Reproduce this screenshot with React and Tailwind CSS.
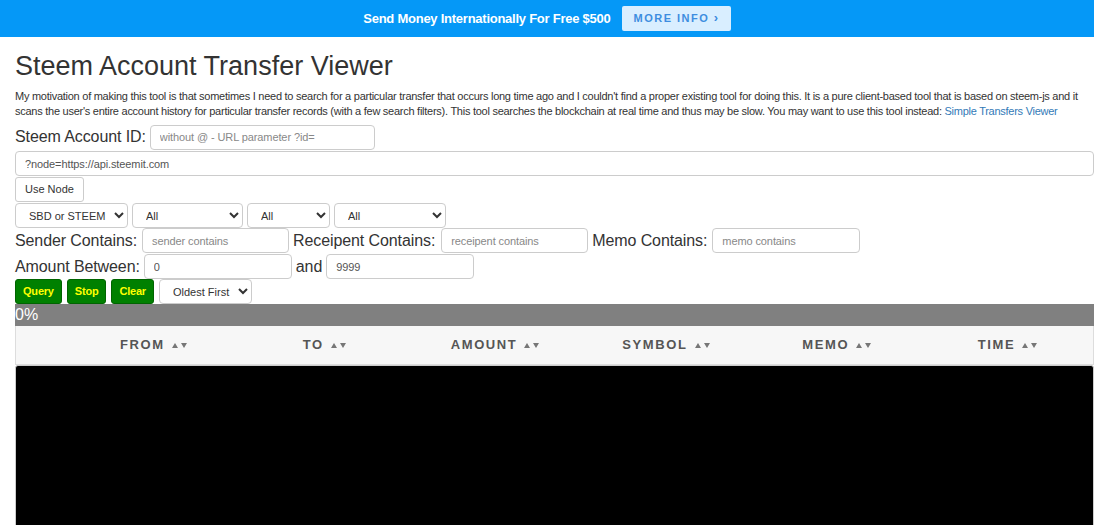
import { useState } from 'react';

const inputCls =
    'h-[25px] border border-[#ccc] rounded-[4px] px-[9px] text-[11px] tracking-[-0.1px] text-[#555] placeholder:text-[#888] bg-white outline-none';
const selectCls =
    'h-[25px] border border-[#ccc] rounded-[4px] pl-[9px] pr-[4px] text-[11px] text-[#333] bg-white';
const greenBtn =
    'h-[25px] px-[7px] bg-[#008000] border border-[#006400] rounded-[3px] text-[11px] font-bold tracking-[-0.2px] text-[#ffff00]';

const SortArrows = () => (
    <span className="inline-flex items-center gap-[3px] ml-[7px] text-[#777]">
        <svg width="6" height="5" viewBox="0 0 6 5"><path d="M3 0L6 5H0z" fill="currentColor" /></svg>
        <svg width="6" height="5" viewBox="0 0 6 5"><path d="M0 0H6L3 5z" fill="currentColor" /></svg>
    </span>
);

export default function App() {
    const [sort, setSort] = useState('oldest');
    const columns = ['FROM', 'TO', 'AMOUNT', 'SYMBOL', 'MEMO', 'TIME'];

    return (
        <div className="min-h-screen bg-white text-[#333] font-['Liberation_Sans',Arial,sans-serif] overflow-hidden">
            {/* Promo banner */}
            <div className="h-[37px] bg-[#0598f7] flex items-center justify-center gap-[12px]">
                <span className="text-white text-[13px] tracking-[-0.25px] font-bold">Send Money Internationally For Free $500</span>
                <button className="h-[25px] px-[11px] bg-[#d9eeff] rounded-[2px] text-[#3d8de0] text-[11px] font-bold tracking-[1.5px]">
                    MORE INFO <span className="font-extrabold text-[13px] leading-none">›</span>
                </button>
            </div>

            <div className="pl-[15px]">
                <h1 className="text-[27px] leading-[32px] mt-[13px] mb-[7px] text-[#333]">Steem Account Transfer Viewer</h1>
                <p className="text-[11px] tracking-[-0.26px] leading-[15px] text-[#333]">
                    My motivation of making this tool is that sometimes I need to search for a particular transfer that occurs long time ago and I couldn't find a proper existing tool for doing this. It is a pure client-based tool that is based on steem-js and it scans the user's entire account history for particular transfer records (with a few search filters). This tool searches the blockchain at real time and thus may be slow. You may want to use this tool instead:{' '}
                    <a className="text-[#337ab7]">Simple Transfers Viewer</a>
                </p>

                <div className="flex items-center mt-[5px] h-[26px]">
                    <label className="text-[16px] tracking-[-0.1px] mr-[4px]">Steem Account ID:</label>
                    <input className={`${inputCls} w-[225px]`} placeholder="without @ - URL parameter ?id=" />
                </div>
                <div className="flex mt-[1px]">
                    <input className={`${inputCls} w-full`} defaultValue="?node=https://api.steemit.com" />
                </div>
                <div className="flex mt-[1px]">
                    <button className="h-[25px] px-[9px] border border-[#ccc] rounded-[3px] bg-white text-[11px] text-[#333]">Use Node</button>
                </div>
                <div className="flex gap-[4px] mt-[1px]">
                    <select className={`${selectCls} w-[113px]`}><option>SBD or STEEM</option></select>
                    <select className={`${selectCls} w-[111px]`}><option>All</option></select>
                    <select className={`${selectCls} w-[83px]`}><option>All</option></select>
                    <select className={`${selectCls} w-[112px]`}><option>All</option></select>
                </div>
                <div className="flex items-center h-[25px] text-[16px] tracking-[-0.1px]">
                    <span className="mr-[5px]">Sender Contains:</span>
                    <input className={`${inputCls} w-[147px]`} placeholder="sender contains" />
                    <span className="ml-[4px] mr-[6px]">Receipent Contains:</span>
                    <input className={`${inputCls} w-[147px]`} placeholder="receipent contains" />
                    <span className="ml-[4px] mr-[5px]">Memo Contains:</span>
                    <input className={`${inputCls} w-[148px]`} placeholder="memo contains" />
                </div>
                <div className="flex items-center mt-[1px] h-[25px] text-[16px] tracking-[-0.1px]">
                    <span className="mr-[4px]">Amount Between:</span>
                    <input className={`${inputCls} w-[148px]`} defaultValue="0" />
                    <span className="mx-[4px]">and</span>
                    <input className={`${inputCls} w-[148px]`} defaultValue="9999" />
                </div>
                <div className="flex gap-[5px] h-[25px]">
                    <button className={greenBtn}>Query</button>
                    <button className={greenBtn}>Stop</button>
                    <button className={greenBtn}>Clear</button>
                    <select
                        value={sort}
                        onChange={e => setSort(e.target.value)}
                        className={`${selectCls} w-[93px]`}
                    >
                        <option value="oldest">Oldest First</option>
                        <option value="newest">Newest First</option>
                    </select>
                </div>

                {/* Progress */}
                <div className="h-[22px] bg-[#808080] text-white text-[16px] leading-[22px]">0%</div>

                {/* Table header */}
                <div className="flex h-[39px] bg-[#f7f7f7] border border-[#ddd] border-t-0 items-center text-[13px] font-bold tracking-[1.6px] text-[#555]">
                    <div className="w-[52px] shrink-0" />
                    {columns.map(c => (
                        <div key={c} className="flex-1 flex items-center justify-center">
                            {c}
                            <SortArrows />
                        </div>
                    ))}
                </div>

                <textarea className="block w-full h-[170px] bg-black border border-[#ccc] rounded-[3px]" />
            </div>
        </div>
    );
}
